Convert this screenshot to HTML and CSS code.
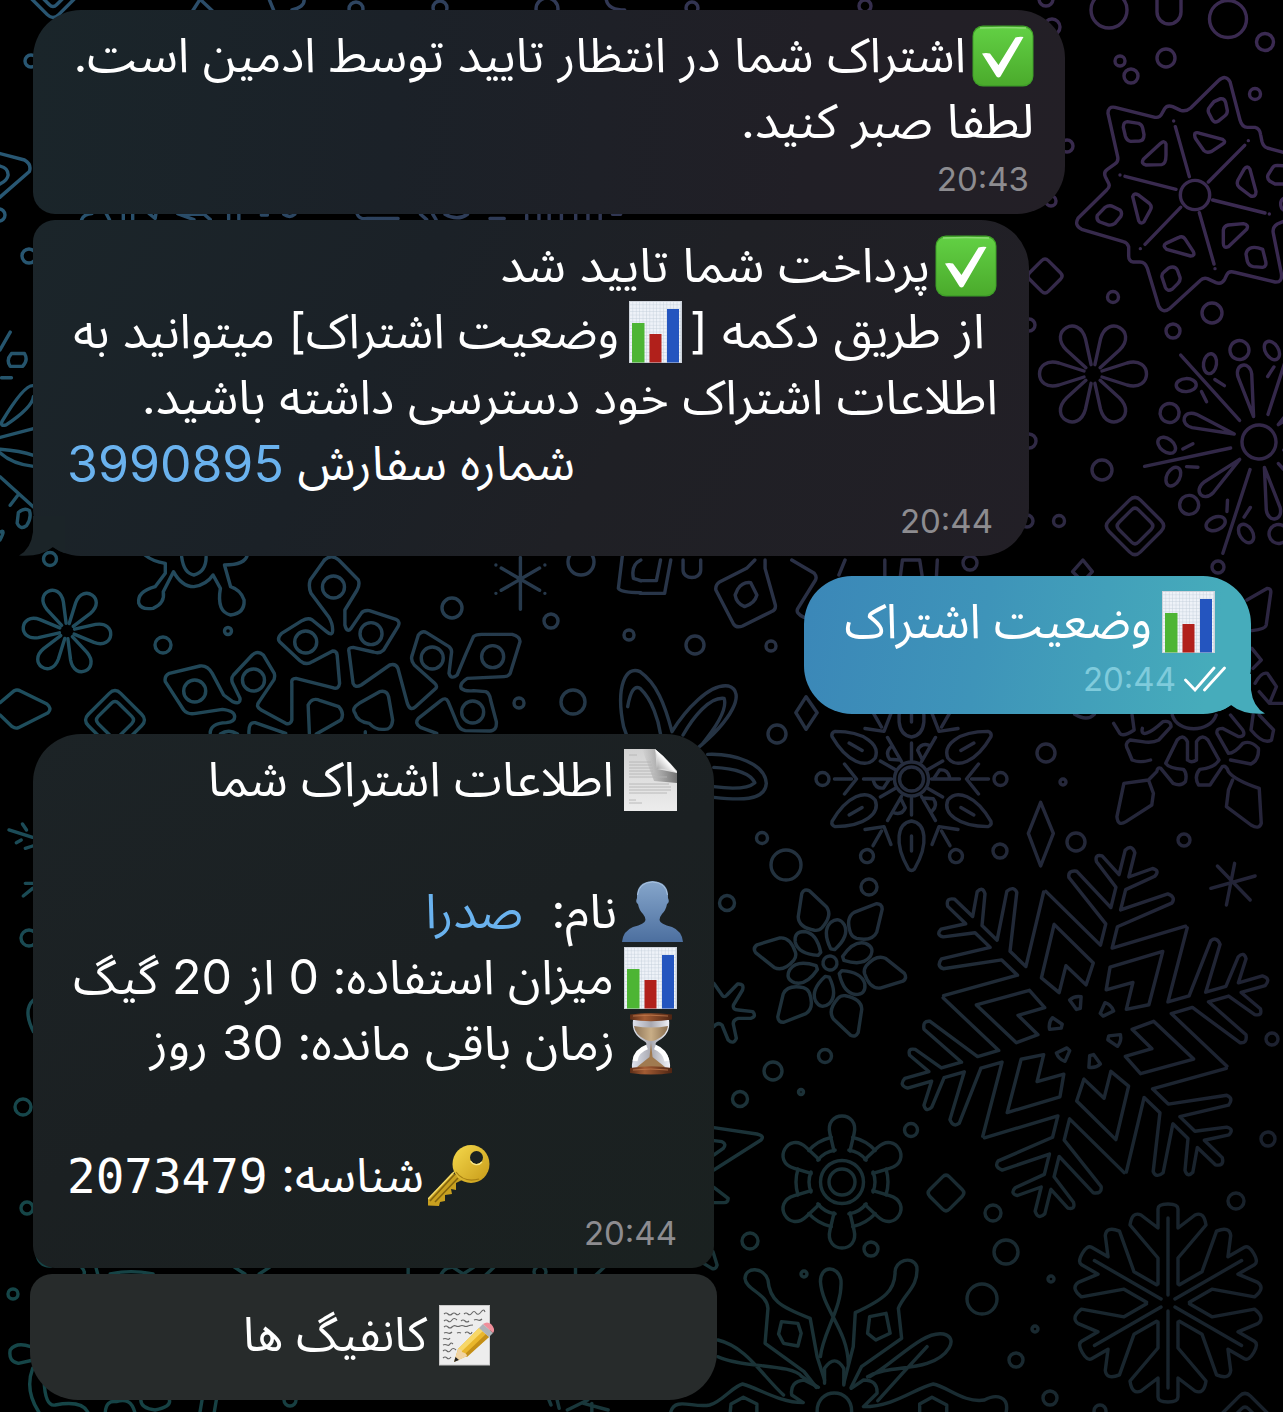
FILE: index.html
```html
<!DOCTYPE html>
<html lang="fa">
<head>
<meta charset="utf-8">
<title>گفتگو</title>
<link rel="stylesheet" href="styles.css">
</head>
<body>
<svg class="defs" width="0" height="0" aria-hidden="true">
  <defs>
    <linearGradient id="gGreen" x1="0" y1="0" x2="0" y2="1"><stop offset="0" stop-color="#62d044"/><stop offset="1" stop-color="#4bab2c"/></linearGradient>
    <linearGradient id="gPaper" x1="0" y1="0" x2="0" y2="1"><stop offset="0" stop-color="#d2d2d2"/><stop offset="1" stop-color="#ececec"/></linearGradient>
    <linearGradient id="gFold" x1="0" y1="1" x2="1" y2="0"><stop offset="0" stop-color="#8a8a8a"/><stop offset=".5" stop-color="#fafafa"/><stop offset="1" stop-color="#cfcfcf"/></linearGradient>
    <linearGradient id="gShade" x1="0" y1="0" x2="1" y2="0"><stop offset="0" stop-color="#555" stop-opacity="0"/><stop offset="1" stop-color="#444" stop-opacity=".7"/></linearGradient>
    <linearGradient id="gMan" x1="0" y1="0" x2="0" y2="1"><stop offset="0" stop-color="#86a6cb"/><stop offset="1" stop-color="#4c6f9f"/></linearGradient>
    <linearGradient id="gWood" x1="0" y1="0" x2="1" y2="0"><stop offset="0" stop-color="#5b2c16"/><stop offset=".35" stop-color="#a35c34"/><stop offset="1" stop-color="#4e2412"/></linearGradient>
    <linearGradient id="gGlass" x1="0" y1="0" x2="1" y2="0"><stop offset="0" stop-color="#dfe3ee"/><stop offset=".5" stop-color="#a8a8b0"/><stop offset="1" stop-color="#f2f4fa"/></linearGradient>
    <linearGradient id="gSand" x1="0" y1="0" x2="1" y2="0"><stop offset="0" stop-color="#8d7457"/><stop offset=".5" stop-color="#c9ae87"/><stop offset="1" stop-color="#8a6f50"/></linearGradient>
    <linearGradient id="gKey" x1="0" y1="0" x2="1" y2="1"><stop offset="0" stop-color="#f5d94c"/><stop offset="1" stop-color="#c79a18"/></linearGradient>
    <pattern id="grid" width="3.4" height="3.4" patternUnits="userSpaceOnUse"><rect width="3.4" height="3.4" fill="#eef2f8"/><path d="M0 0H3.4M0 0V3.4" stroke="#c3cedb" stroke-width=".9"/></pattern>
    <symbol id="check" viewBox="0 0 62 62">
      <rect x=".5" y=".5" width="61" height="61" rx="10.500" fill="#3f9f28"/>
      <rect x="1.500" y="2" width="59" height="58" rx="9.500" fill="url(#gGreen)"/>
      <path d="M8 3Q31 2 54 3" stroke="#8bdc72" stroke-width="1.500" fill="none"/>
      <path d="M10 28.500Q14 27.500 18 28.500L26.500 40L43.500 12.500Q47 11.500 51.500 12L28.500 51.500Q26.500 53.500 24.500 51.500Z" fill="#fff"/>
    </symbol>
    <symbol id="chart" viewBox="0 0 53 62">
      <rect width="53" height="62" fill="#cdd2da"/><rect x="1" y="1" width="51" height="60" fill="url(#grid)"/>
      <rect x="3" y="22" width="12.500" height="39.500" fill="#4db534"/><rect x="20.500" y="33" width="12" height="28.500" fill="#b1201b"/><rect x="38" y="8" width="12" height="53.500" fill="#2455bf"/>
    </symbol>
    <symbol id="page" viewBox="0 0 53 62">
      <path d="M0 0H31Q43 10 53 22V62H0Z" fill="url(#gPaper)"/>
      <path d="M18 0H31L33 20L53 24V34L30 32Z" fill="url(#gShade)"/>
      <path d="M31 0Q34 8 33 20Q44 19 53 24Q44 10 31 0Z" fill="url(#gFold)"/>
      <path d="M5 6h8M5 13h22M5 16h23M5 19h24M5 22h24M5 25h28M5 28h38M5 35h40M5 38h42M5 41h42M5 44h38M5 51h7M5 54h13" stroke="#b4b4b4" stroke-width=".9"/>
    </symbol>
    <symbol id="man" viewBox="0 0 61 62">
      <path d="M0 61Q1 50 11 46Q23 43 23.500 39Q23.500 36 21 33Q17 29 16 23Q13 21 15 17Q14 1 30.500 0Q47 1 46 17Q48 21 45 23Q44 29 40 33Q37.500 36 37.500 39Q38 43 50 46Q60 50 61 61Z" fill="url(#gMan)"/>
      <path d="M15.500 14Q17 1.500 30.500 1Q44 1.500 45.500 14" stroke="#a9c2de" fill="none"/>
    </symbol>
    <symbol id="glass" viewBox="0 0 44 62">
      <path d="M4 7H40Q42 21 29 28Q24 31 29 34Q42 41 41 55H3Q2 41 15 34Q20 31 15 28Q2 21 4 7Z" fill="url(#gGlass)"/>
      <path d="M5 13Q22 16 39 13Q38 22 27 27Q22 29 17 27Q6 22 5 13Z" fill="url(#gSand)"/>
      <path d="M22 30L20.500 44L8 54Q22 58 36 54L23.500 44Z" fill="#a07a50"/>
      <path d="M6 48Q7 38 18 34M38 48Q36 38 26 34" stroke="#fff" stroke-width="5" fill="none"/>
      <path d="M1 1.500Q22-1 43 1.500V6.500Q22 10 1 6.500ZM1 55Q22 51.500 43 55V60Q22 63 1 60Z" fill="url(#gWood)"/>
      <path d="M4 3Q22 1.500 39 3M4 57Q22 55 39 57" stroke="#c07a4e" stroke-width=".8" fill="none"/>
    </symbol>
    <symbol id="key" viewBox="0 0 62 62">
      <path d="M24 28L0 54V60.500L11 61L12 57L17 56V50L24 49L23 44L28 45V38L36 34Z" fill="#c9a01f"/>
      <path d="M27 29L2 56M30 33L7 57" stroke="#83640f" stroke-width="1.600"/><path d="M26 27L0 54" stroke="#f4dc6b" stroke-width="1.500"/>
      <ellipse cx="43" cy="19" rx="18.500" ry="19" fill="url(#gKey)"/>
      <path d="M28 27Q36 38 51 34" stroke="#a67f12" stroke-width="1.200" fill="none"/>
      <circle cx="48.500" cy="12.500" r="6.500" fill="#1a2222"/><path d="M42.500 16A7 7 0 0 0 54 17" stroke="#fae98a" stroke-width="1.200" fill="none"/>
    </symbol>
    <symbol id="memo" viewBox="0 0 55 61">
      <rect width="51" height="60.500" fill="#c9c9c9"/><rect x="1" y="1" width="49" height="58.500" fill="#ededed"/>
      <path d="M5 9q2-2 4 0t4 0 4 0 4-1M25 9q2-2 4 0t4-1 4 0 5-1 4 0M5 16q2-2 4 0t4-1 5 0M22 16q2-2 4 0t4 0M35 15q2-1 4 0t4-1M5 22q2-2 4 0t4 0 4-1 4 0 4 0 4 0 5-1M5 28q2-1 4 0t4-1M18 28q2-1 4 0M26 28q2-2 4 0t3-1M4 34q2-1 4 0t3-1M4 40q2-1 4 0t3-1 3 0M4 46q2-2 4 0t4-1 5 0M4 53q2-2 4 0t4-1" stroke="#666" stroke-width="1.100" fill="none"/>
      <path d="M15 57L19 44L40 23L50 32L28 51Z" fill="#e9b62c"/><path d="M19 44L40 23L44 26L22 47Z" fill="#f7d767"/><path d="M25 50L47 29L50 32L28 52Z" fill="#c48f17"/>
      <path d="M15 57L19 44Q23 44 23 47Q28 48 28 51Z" fill="#f0d3a2"/><path d="M15 57L16.500 52L20 55Z" fill="#222"/>
      <path d="M40 23L44 19L54 28L50 32Z" fill="#aeb3b8"/><path d="M44 19Q48 16 52 19Q57 24 54 28Z" fill="#ef8f9b"/>
    </symbol>

    <g class="shapes">
    <path id="dia" d="M-3-14Q0-17 3-14L14-3Q17 0 14 3L3 14Q0 17-3 14L-14 3Q-17 0-14-3Z"/>
    <path id="petal" d="M9-3L34-11C60-18 60 18 34 11L9 3"/>
    <g id="flower"><use href="#petal"/><use href="#petal" transform="rotate(60)"/><use href="#petal" transform="rotate(120)"/><use href="#petal" transform="rotate(180)"/><use href="#petal" transform="rotate(240)"/><use href="#petal" transform="rotate(300)"/></g>
    <g id="ray"><path d="M29 0H117M65-12L76-9M65 12L76 9"/><ellipse cx="91" cy="16" rx="10" ry="6.500" transform="rotate(50 91 16)"/><ellipse cx="91" cy="-16" rx="10" ry="6.500" transform="rotate(-50 91 -16)"/><g transform="rotate(30)"><path d="M26 0L68-7C82-8 82 8 68 7Z"/><circle cx="94" r="9.500"/></g></g>
    <g id="burst"><circle r="17"/><use href="#ray"/><use href="#ray" transform="rotate(60)"/><use href="#ray" transform="rotate(120)"/><use href="#ray" transform="rotate(180)"/><use href="#ray" transform="rotate(240)"/><use href="#ray" transform="rotate(300)"/></g>
    <g id="lampArm"><path d="M20 0H48M67-15L55 0L67 15M60 0H77M22 0L28-9Q36-10 38-2"/><circle cx="89" r="6.500"/><g transform="rotate(30)"><path d="M42 0C44-14 64-18 90-3Q93 0 90 3C64 18 44 14 42 0ZM57 0H72M19 0H36"/></g></g>
    <g id="lamp"><circle r="17"/><circle r="12"/><use href="#lampArm"/><use href="#lampArm" transform="rotate(60)"/><use href="#lampArm" transform="rotate(120)"/><use href="#lampArm" transform="rotate(180)"/><use href="#lampArm" transform="rotate(240)"/><use href="#lampArm" transform="rotate(300)"/></g>
    <g id="leafArm"><path d="M36-4Q44-18 54-15L75-4Q79 0 75 4L54 15Q44 18 36 4Q34 0 36-4Z"/><path d="M14-2Q30-14 40-7Q48 0 40 7Q30 14 14 2Z" transform="rotate(-30)"/></g>
    <g id="leaf"><circle r="7"/><use href="#leafArm"/><use href="#leafArm" transform="rotate(60)"/><use href="#leafArm" transform="rotate(120)"/><use href="#leafArm" transform="rotate(180)"/><use href="#leafArm" transform="rotate(240)"/><use href="#leafArm" transform="rotate(300)"/></g>
    <g id="bigArm"><path d="M127-72L88-6L110-6L146-53Q153-56 154-47L127-5H148L168-30Q175-34 175-26L161-5H186Q194 0 186 5H161L175 26Q175 34 168 30L148 5H127L154 47Q153 56 146 53L110 6L88 6L127 72"/><g transform="rotate(30)"><path d="M112 0L64-27L45-14L69 0L45 14L64 27Z"/><path d="M24-2L35-6Q38 0 35 6L24 2Z"/></g></g>
    <g id="big"><use href="#bigArm"/><use href="#bigArm" transform="rotate(60)"/><use href="#bigArm" transform="rotate(120)"/><use href="#bigArm" transform="rotate(180)"/><use href="#bigArm" transform="rotate(240)"/><use href="#bigArm" transform="rotate(300)"/></g>
    <g id="crystalArm"><path d="M8 0H85M19-10H45L78-38Q92-36 88-27L75-10H94Q99-10 99 0T94 10H75L88 27Q92 36 78 38L45 10H19"/></g>
    <g id="crystal"><use href="#crystalArm" transform="rotate(30)"/><use href="#crystalArm" transform="rotate(90)"/><use href="#crystalArm" transform="rotate(150)"/><use href="#crystalArm" transform="rotate(210)"/><use href="#crystalArm" transform="rotate(270)"/><use href="#crystalArm" transform="rotate(330)"/></g>
    <g id="wheelArm"><path d="M31-8L48-12C72-18 72 18 48 12L31 8"/><g transform="rotate(30)"><path d="M44-13Q48 0 44 13M31-10Q35 0 31 10"/></g></g>
    <g id="wheel"><circle r="21.500"/><circle r="13"/><use href="#wheelArm" transform="rotate(30)"/><use href="#wheelArm" transform="rotate(90)"/><use href="#wheelArm" transform="rotate(150)"/><use href="#wheelArm" transform="rotate(210)"/><use href="#wheelArm" transform="rotate(270)"/><use href="#wheelArm" transform="rotate(330)"/></g>
    </g>
  </defs>
</svg>

<svg class="wallpaper" viewBox="0 0 1283 1412" aria-hidden="true">
  <defs>
    <linearGradient id="wTop" x1="0" y1="0" x2="1" y2="0"><stop offset="0" stop-color="#285874"/><stop offset=".4" stop-color="#303b57"/><stop offset=".75" stop-color="#362a4a"/><stop offset="1" stop-color="#3b2a52"/></linearGradient>
    <linearGradient id="wBottom" x1="0" y1="0" x2="1" y2="0"><stop offset="0" stop-color="#154648"/><stop offset=".6" stop-color="#1a3236"/><stop offset="1" stop-color="#18202a"/></linearGradient>
    <linearGradient id="wFade" x1="0" y1="0" x2="0" y2="1"><stop offset=".15" stop-color="#000"/><stop offset=".85" stop-color="#fff"/></linearGradient>
    <mask id="fade"><rect width="1283" height="1412" fill="url(#wFade)"/></mask>
    <mask id="pattern" maskUnits="userSpaceOnUse" x="0" y="0" width="1283" height="1412">
      <g class="ink">
        <use href="#flower" transform="translate(1093 374)"/>
        <use href="#flower" transform="translate(67 631) rotate(5) scale(.82)"/>
        <use href="#burst" transform="translate(1259 442) rotate(48)"/>
        <use href="#lamp" transform="translate(911.500 779)"/>
        <use href="#leaf" transform="translate(830 963) rotate(11)"/>
        <use href="#big" transform="translate(1085 1032) rotate(44)"/>
        <use href="#crystal" transform="translate(1168 1303)"/>
        <use href="#wheel" transform="translate(842 1182)"/>
        <use href="#dia" transform="translate(1045 276) scale(1.100)"/>
        <use href="#dia" transform="translate(1135 526) scale(1.850)"/><use href="#dia" transform="translate(1135 526) scale(1.150)"/>
        <use href="#dia" transform="translate(115 720) scale(1.900)"/><use href="#dia" transform="translate(115 720) scale(1.200)"/>
        <use href="#dia" transform="translate(946 1193) scale(1.150)"/>
        <use href="#dia" transform="translate(53-12) scale(1.900)"/><use href="#dia" transform="translate(53-12) scale(1.200)"/>
        <use href="#dia" transform="translate(1245 1422) scale(1.850)"/><use href="#dia" transform="translate(1245 1424) scale(1.100)"/>
        <circle cx="1109" cy="10" r="18"/><circle cx="1228" cy="19" r="18.500"/><circle cx="1265" cy="42" r="8.500"/><circle cx="1166" cy="58" r="9"/><circle cx="1120" cy="61" r="5"/><circle cx="1131" cy="76" r="7"/><circle cx="1255" cy="94" r="5.500"/><circle cx="1052" cy="27" r="8"/><circle cx="1046" cy="-1" r="7"/><circle cx="865" cy="6" r="6"/><circle cx="692" cy="8" r="6"/><circle cx="1067" cy="146" r="6"/><circle cx="1051" cy="201" r="5"/>
        <circle cx="1113" cy="297" r="5.500"/><circle cx="1212" cy="313" r="10"/><circle cx="1173" cy="331" r="7"/><circle cx="1102" cy="470" r="10"/><circle cx="1059" cy="521" r="5.500"/><circle cx="1029" cy="441" r="7"/><circle cx="1029" cy="325" r="6"/><circle cx="1027" cy="521" r="6"/>
        <circle cx="356" cy="9" r="7"/><circle cx="440" cy="8" r="7"/><circle cx="547" cy="9" r="11"/><circle cx="31" cy="61" r="6"/><circle cx="29" cy="256" r="7"/><circle cx="-1" cy="215" r="6"/>
        <circle cx="50" cy="559" r="6.500"/><circle cx="163" cy="645" r="8"/><circle cx="228" cy="631" r="3.500"/><circle cx="452" cy="608" r="10"/><circle cx="551" cy="621" r="7"/><circle cx="629" cy="635" r="5"/><circle cx="519" cy="703" r="5"/><circle cx="573" cy="702" r="12"/><circle cx="581" cy="562" r="13"/>
        <circle cx="695" cy="645" r="9"/><circle cx="771" cy="646" r="5"/><circle cx="777" cy="734" r="9"/><circle cx="1046" cy="753" r="9"/><circle cx="1063" cy="782" r="3"/><circle cx="1076" cy="842" r="9"/><circle cx="1184" cy="840" r="6"/><circle cx="762" cy="838" r="5.500"/><circle cx="786" cy="865" r="15"/><circle cx="869" cy="887" r="8"/><circle cx="727" cy="903" r="7.500"/><circle cx="1000" cy="851" r="7"/><circle cx="970" cy="563" r="7"/><circle cx="1218" cy="567" r="6"/>
        <circle cx="773" cy="1071" r="9"/><circle cx="825" cy="1056" r="6.500"/><circle cx="801" cy="1092" r="2.500"/><circle cx="740" cy="1099" r="7.500"/><circle cx="911" cy="1130" r="6.500"/><circle cx="750" cy="1241" r="8"/><circle cx="871" cy="1249" r="7"/><circle cx="804" cy="1274" r="3"/><circle cx="993" cy="1213" r="8"/><circle cx="1006" cy="1252" r="12"/><circle cx="982" cy="1299" r="15"/><circle cx="1051" cy="1279" r="3"/><circle cx="1035" cy="1329" r="3"/><circle cx="1016" cy="1360" r="7"/><circle cx="1050" cy="1398" r="7"/><circle cx="1272" cy="1039" r="6"/><circle cx="1268" cy="1139" r="7"/><circle cx="1236" cy="1201" r="8"/><circle cx="1100" cy="1411" r="6"/>
        <circle cx="29" cy="938" r="8"/><circle cx="23" cy="1107" r="8"/><circle cx="27" cy="1208" r="6"/><circle cx="13" cy="1294" r="5"/><circle cx="290" cy="1400" r="6"/><circle cx="540" cy="1272" r="6"/>
        <path d="M1157 0V12A12 12 0 0 0 1181 12V0"/>

        <g transform="scale(.4083 .3571)">
          <path d="M472 30L490-2L520 30M660 0L670 28M745 0Q745 20 715 28M1485 0Q1490 28 1530 28M0 430L60 448Q78 460 72 480L0 552M0 465Q20 470 20 490Q18 505 0 515M0 980L25 930M4 1058H28M28 990H60Q70 1010 55 1026H25Q14 1008 28 990ZM82 1080Q60 1075 5 1180Q0 1195 15 1190Q80 1140 82 1110M82 1200L0 1225M0 1258Q50 1262 82 1275M0 1268Q30 1300 82 1306M0 1335L82 1420M45 1385L25 1415M0 1490Q15 1480 0 1512M45 1435Q60 1420 72 1430Q78 1450 65 1472Q50 1485 42 1465Z"/>
          <path d="M200 615Q205 600 225 598M260 598L268 615M302 598V615M325 598V615M365 598L380 612L382 598M435 598L475 615M450 600L500 600L515 615M560 598V615M585 598V615M640 602H655M695 600Q710 612 722 600M875 600Q880 615 900 612L975 612M1030 600L1045 615M1060 600L1068 615M1090 600Q1120 620 1145 600M1200 612H1235M1290 602V615M1320 600V615M1345 600V615M1375 600V615M1410 600V615M1440 600V615M1470 600V615M1500 600H1520"/>
        </g>
        <g transform="translate(1060 60) scale(.33333)">
          <path d="M680 280L622 264Q610 260 606 245L602 225Q600 205 585 202H562Q546 202 540 180L510 65Q498 42 475 62L392 144Q378 156 362 151L338 140Q322 134 314 146L306 160Q300 174 285 172L165 142Q144 138 144 160L173 290Q176 304 165 312L142 328Q130 336 136 350L145 368Q152 380 140 390L54 475Q42 496 65 508L190 545Q202 548 206 560V588Q206 604 220 606H240Q256 606 262 625L296 738Q308 762 330 745L420 662Q430 652 442 656L468 668Q485 674 494 658L500 645Q506 632 520 636L645 666Q668 668 664 640L640 520Q636 502 652 492L680 480"/>
          <circle cx="405" cy="405" r="44"/>
          <path d="M346 200L388 350M341 183V183M554 256L445 366M565 242V242M195 349L348 388M180 345V345M255 553L362 442M241 566V566M462 612L418 458M465 626V626M615 459L458 420M628 462V462"/>
          <path d="M405 220Q410 216 420 220L488 238Q500 246 488 252L455 274Q440 280 432 272L408 238Q402 228 405 220ZM318 252V285Q318 312 305 314L258 315Q242 312 250 298L302 250Q314 240 318 252ZM552 328Q562 314 570 328L588 395Q588 412 572 408L538 382Q528 374 534 360ZM218 410Q222 398 234 404L268 430Q278 440 270 452L252 485Q242 494 236 482ZM505 495L550 491Q568 494 560 508L505 560Q490 566 490 550V510Q492 498 505 495ZM355 533Q368 526 376 538L400 575Q406 588 392 588L320 568Q306 558 318 550Z"/>
          <path d="M462 125L482 116Q494 115 497 128L502 152Q502 162 494 168L474 184Q462 190 456 178L446 158Q442 148 450 140ZM202 185L236 190Q246 194 248 204L252 224Q252 242 238 243L212 244Q200 242 196 228L190 202Q190 186 202 185ZM135 442Q148 434 160 440L180 450Q188 458 182 470L165 490Q154 498 142 494L120 486Q108 480 112 466ZM570 565Q584 558 608 568L616 600Q622 620 608 622L580 620Q566 618 562 604L558 582Q560 570 570 565ZM326 624Q344 616 352 630L360 652Q362 662 354 670L336 688Q322 696 316 682L306 652Q304 642 312 636ZM680 318L652 316Q640 316 636 326L624 345Q620 356 630 364L645 372L680 372M680 412Q662 415 662 432T680 455"/>
        </g>
        <g transform="translate(0 540) scale(.40816 .33333)">
          <path d="M355 45Q375 65 405 70V100L380 140Q335 155 340 190Q345 210 375 205Q405 190 400 155L425 95Q445 140 475 140Q505 135 522 105L540 145Q530 215 565 225Q600 220 598 180Q590 150 565 140L550 75Q600 75 606 45M445 50Q450 100 475 105Q505 95 505 50"/>
          <path d="M795 60Q812 40 830 60L878 120Q882 135 875 150L845 210V255Q850 280 860 265L885 220Q890 210 905 212L970 238Q982 245 975 260L940 330Q930 342 915 336L865 322Q852 322 855 335L865 430Q870 445 885 435L955 375Q970 370 975 385L998 490Q1005 515 1018 500L1068 445Q1072 438 1065 430L1015 375Q1005 360 1010 345L1025 285Q1035 270 1045 278L1100 320Q1108 328 1106 340L1100 400Q1105 420 1120 405L1142 340L1160 290Q1165 283 1180 283H1255Q1275 290 1274 305L1250 400Q1245 410 1235 410L1145 415Q1125 430 1130 445Q1140 455 1160 452L1190 455Q1200 460 1202 480L1216 545Q1218 572 1200 573L1140 572Q1125 568 1120 550L1098 485Q1092 470 1080 482L1025 535Q1015 550 1030 562L1070 580"/>
          <path d="M795 60L760 120Q755 140 762 160L805 230Q815 250 815 270Q815 290 800 275L765 240Q755 232 740 242L690 280Q678 295 685 305L735 362Q750 378 765 365L815 333Q825 333 826 345L832 430Q830 450 815 443L725 415Q713 415 715 430V540Q712 555 700 550L640 510Q625 500 635 485L668 425Q675 415 672 400L645 345Q632 330 618 345L572 405Q565 415 570 430L588 475Q590 495 570 485L548 465L520 400Q508 375 490 378L415 400Q402 408 405 425L450 510Q460 525 480 520L545 508Q575 512 575 530Q575 545 555 548Q515 550 515 580M610 582Q608 545 625 548L700 580M758 580L755 495Q765 470 785 482L830 500Q845 520 835 540L775 582M870 520Q860 505 880 490L930 455Q948 450 952 470L962 540Q960 570 940 568Q920 570 905 550Q875 545 870 520M895 575V582"/>
          <ellipse cx="817" cy="141" rx="27" ry="33"/><ellipse cx="749" cy="306" rx="27" ry="33"/><ellipse cx="909" cy="281" rx="27" ry="33"/><ellipse cx="477" cy="453" rx="27" ry="33"/><ellipse cx="621" cy="420" rx="27" ry="33"/><ellipse cx="1059" cy="354" rx="27" ry="33"/><ellipse cx="1207" cy="350" rx="27" ry="33"/><ellipse cx="1158" cy="516" rx="27" ry="33"/><path d="M540 582Q560 565 582 582"/>
          <path d="M0 488L35 452Q42 447 50 453L115 492Q128 505 118 518L45 563Q38 567 30 560L0 525"/>
          <path d="M1275 52V208M1215 75V75M1335 75V75M1215 160V160M1335 160V160M1228 84L1322 151M1322 84L1228 151M1525 45L1515 145Q1520 158 1570 158M1570 60Q1545 75 1552 115L1570 122"/>
          <path d="M22 870L80 892M55 852L65 870M40 908L52 900M62 925L80 918M62 1030H80M57 1068L80 1045"/>
        </g>
        <g transform="translate(640 560) scale(.41008 .33333)">
          <path d="M50 0L40 62H0M75 0L60 100H0M105 0V30C105 60 148 60 148 30V0M305 0V25L330 135Q332 150 320 155L250 198Q235 205 228 192L185 90Q183 75 195 65L260 25L280 0M238 88Q250 65 270 68L285 105Q280 130 255 140Q235 130 232 105ZM370 0L425 40Q432 50 428 60L385 145Q378 160 400 172M485 45L500 0M597 0V47M725 0L723 47M635 47L640 0H682L688 47"/>
          <path d="M405 410L432 458L405 508L380 458ZM977 727L1008 820L977 918L947 820ZM1080 0L1103 35L1080 65L1055 35Z"/>
          <path d="M0 335C40 370 60 430 78 515C110 450 170 370 215 378C260 395 225 480 135 570M0 385C30 420 45 480 50 522M105 525C130 470 170 410 205 415C215 450 180 510 150 555M165 583C230 580 305 610 308 670C305 725 240 720 180 712M180 622C230 625 270 640 280 668C260 690 210 685 180 680M0 335C-35 315-60 380-40 500L-20 570M-30 440Q-20 370 0 385"/>
          <path d="M1480 120L1530 85Q1540 85 1538 100L1527 195Q1525 208 1492 212M1492 265L1515 300L1495 325M1500 370Q1515 335 1530 340L1552 380L1535 430M1510 395L1535 430H1570M1060 463Q1090 485 1108 463"/>
          <path d="M1155 490L1170 520Q1178 532 1205 510L1200 465M1225 505C1220 530 1240 525 1275 485Q1295 480 1295 500L1265 540Q1250 550 1225 545L1195 540Q1180 550 1190 570L1200 600Q1220 610 1245 600M1298 465C1310 520 1390 520 1405 465M1495 465L1490 510Q1520 555 1540 540L1545 510L1510 465M1440 465L1470 510Q1478 530 1460 530L1420 505Q1405 505 1407 520L1435 580M1335 600V545Q1325 520 1310 540L1282 610Q1290 625 1325 628Q1335 640 1330 665Q1320 680 1300 670L1270 625Q1262 620 1260 635L1240 660L1180 670L1163 770Q1165 800 1185 785L1248 735L1252 700L1240 660M1335 600Q1345 610 1357 600V545Q1370 520 1385 540L1412 600Q1400 625 1365 628Q1350 650 1362 675H1390L1420 620Q1430 615 1435 635Q1450 660 1510 685L1515 790Q1510 810 1490 795L1430 740L1435 690L1445 660M1435 580Q1450 580 1470 550Q1490 540 1508 565Q1510 600 1490 612L1440 600"/>
          <path d="M1450 910L1430 1035M1408 918L1488 1020M1392 985L1500 948"/>
        </g>
        <g transform="translate(0 960) scale(.40816 .33333)">
          <path d="M82 120Q55 150 82 215M90 880Q95 920 125 918M200 922Q210 935 205 945M235 922L240 945M270 942Q320 928 375 942M575 922L600 942M660 922L635 942M1000 922V945M1080 945Q1090 920 1110 922L1135 942L1160 922M1210 922L1190 945M1410 922V945M1480 922L1460 945M75 1160Q40 1145 25 1170Q20 1205 45 1210L82 1200M80 1225Q60 1290 95 1356M108 1260Q110 1340 135 1335Q200 1320 215 1356M258 1356Q260 1320 285 1325Q320 1310 330 1356M345 1320Q345 1345 380 1350Q420 1340 415 1320M495 1320L490 1356M530 1320L525 1356M1345 1320L1350 1335M1365 1320L1370 1345M1390 1350L1440 1320M1430 1330L1490 1350M1450 1356V1330"/>
        </g>
        <g transform="translate(640 980) scale(.41008 .33333)">
          <path d="M180 10L200 45Q205 55 212 45L238 12Q255 10 250 30L228 75Q225 90 240 90L275 95Q285 110 270 115H240Q225 120 228 135L235 175Q228 195 215 180L200 135Q190 125 180 140M180 443L285 462Q305 468 295 480L180 570M180 482L200 485Q212 492 203 505L180 525M180 622L215 655Q215 668 205 668H180M178 815L188 855Q185 870 175 865L155 850"/>
          <path d="M430 1222L400 1175L305 1090L312 985C310 940 258 930 256 895C258 860 300 860 312 900C316 960 340 980 415 1015L432 1130L450 1200M515 1222L540 1160L638 1075L630 985C645 940 680 920 675 860C665 825 620 840 622 880C620 930 600 955 525 998L520 1100L497 1210M440 1130C445 1060 495 980 490 900C482 855 440 855 440 905C445 990 508 1050 508 1155"/>
          <path d="M345 1025L385 1030L393 1060L385 1098L350 1090L338 1062ZM560 1010L600 1000L610 1060L575 1080L555 1060ZM190 1080C260 1100 300 1190 350 1245M190 1130C250 1165 370 1150 395 1190L435 1222L400 1200Q365 1205 370 1245L398 1268C340 1268 290 1225 250 1212C225 1220 200 1265 170 1275C130 1285 85 1250 75 1296M560 1190C620 1150 690 1050 740 1062C780 1075 750 1130 700 1150C650 1170 600 1160 555 1190M700 1100L640 1180L580 1262M515 1225L545 1200Q580 1200 578 1240L545 1280C620 1280 670 1225 715 1212C750 1220 790 1270 840 1260C870 1240 900 1250 893 1296M220 1296L222 1272L252 1252L285 1272V1296M682 1296V1272L712 1252L748 1275V1296M432 1296C430 1220 518 1220 516 1296M450 1210V1165Q475 1120 497 1165V1215"/>
        </g>
      </g>
    </mask>
  </defs>
  <g mask="url(#pattern)">
    <rect width="1283" height="1412" fill="url(#wTop)"/>
    <rect width="1283" height="1412" fill="url(#wBottom)" mask="url(#fade)"/>
  </g>
</svg>

<main class="chat">
  <article class="bubble incoming first">
    <p class="line"><svg class="emoji sq"><use href="#check"/></svg><span class="seg" style="width:890px;--s:1.004">اشتراک شما در انتظار تایید توسط ادمین است.</span></p>
    <p class="line"><span class="seg" style="width:290px;--s:1.034">لطفا صبر کنید.</span></p>
    <time class="time">20:43</time>
  </article>

  <article class="bubble incoming second">
    <p class="line"><svg class="emoji sq"><use href="#check"/></svg><span class="seg" style="width:428px;--s:1.032">پرداخت شما تایید شد</span></p>
    <p class="line indent"><span class="seg" style="width:293px;--s:1.04">از طریق دکمه [</span><svg class="emoji tall"><use href="#chart"/></svg><span class="seg" style="width:544px;--s:1.003">وضعیت اشتراک] میتوانید به</span></p>
    <p class="line"><span class="seg" style="width:853px;--s:1.017">اطلاعات اشتراک خود دسترسی داشته باشید.</span></p>
    <p class="line ltr"><a class="link num">3990895</a><span class="seg" style="width:279px">شماره سفارش</span></p>
    <time class="time">20:44</time>
    <svg class="tail left" viewBox="0 0 46 40"><path d="M14 0V16Q12 33 0 39.500Q22 41 34 31Q40 35.500 46 37.300V0Z" fill="#1b2428"/></svg>
  </article>

  <article class="bubble outgoing">
    <p class="line"><svg class="emoji tall"><use href="#chart"/></svg><span class="seg" style="width:308px;--s:.986">وضعیت اشتراک</span></p>
    <div class="status"><svg class="ticks" viewBox="0 0 42 26"><path d="M1.500 14L11 24L30 2M20.500 24L40.500 2"/></svg><time>20:44</time></div>
    <svg class="tail right" viewBox="0 0 46 40"><path d="M32 0V16Q34 33 46 39.500Q24 41 12 31Q6 35.500 0 37.300V0Z" fill="#46acbb"/></svg>
  </article>

  <article class="bubble incoming info">
    <p class="line"><svg class="emoji tall"><use href="#page"/></svg><span class="seg" style="width:405px;--s:1.008">اطلاعات اشتراک شما</span></p>
    <p class="line"></p>
    <p class="line"><svg class="emoji person"><use href="#man"/></svg><span class="seg" style="width:64px;--s:1.03">نام:</span><a class="link seg name" style="width:96px;--s:1.01">صدرا</a></p>
    <p class="line"><svg class="emoji tall"><use href="#chart"/></svg><span class="seg" style="width:539px;--s:1.007">میزان استفاده: 0 از 20 گیگ</span></p>
    <p class="line"><svg class="emoji hour"><use href="#glass"/></svg><span class="seg" style="width:464px;--s:1.027">زمان باقی مانده: 30 روز</span></p>
    <p class="line"></p>
    <p class="line ltr"><code class="code">2073479</code><span class="seg" style="width:141px">شناسه:</span><svg class="emoji sq key"><use href="#key"/></svg></p>
    <time class="time">20:44</time>
  </article>

  <button class="keyboard" type="button"><svg class="emoji memo"><use href="#memo"/></svg><span class="seg" style="width:183px;--s:.968">کانفیگ ها</span></button>
</main>
</body>
</html>
```
FILE: styles.css
```css
* { box-sizing: border-box; }

body {
  margin: 0;
  width: 1283px;
  height: 1412px;
  overflow: hidden;
  position: relative;
  background: #000;
  color: #fff;
  font-family: Inter, "Noto Sans Arabic", "DejaVu Sans", sans-serif;
  font-size: 48px;
}

.defs { position: absolute; }

.wallpaper {
  position: absolute;
  inset: 0;
  width: 1283px;
  height: 1412px;
}

.ink *, .shapes * { vector-effect: non-scaling-stroke; }
.ink {
  fill: none;
  stroke: #fff;
  stroke-width: 3.4;
  stroke-linecap: round;
  stroke-linejoin: round;
}

.chat {
  position: relative;
  display: flex;
  flex-direction: column;
  align-items: flex-start;
  padding: 10px 32px 0 33px;
}

.bubble {
  position: relative;
  isolation: isolate;
  padding: 13px 31px 9px 35px;
  direction: rtl;
}

.incoming { background: linear-gradient(95deg, #1a252a 0, #1b2128 35%, #211f26 75%, #231f26 100%); }

.first { width: 1032px; border-radius: 48px 48px 48px 22px; }

.second {
  width: 996px;
  margin-top: 6px;
  border-radius: 22px 48px 48px 48px;
  background: linear-gradient(120deg, #1b252a 0, #1b2127 35%, #1f2025 60%, #221f26 100%);
}

.outgoing {
  align-self: flex-end;
  width: 447px;
  margin-top: 20px;
  padding-right: 36px;
  border-radius: 48px;
  background: linear-gradient(100deg, #3b87b8 0, #3e94b9 40%, #46acbb 90%);
}

.info {
  width: 681px;
  margin-top: 20px;
  padding-right: 37px;
  border-radius: 48px 48px 22px 22px;
  background: linear-gradient(150deg, #1c2326, #1b2022 50%, #1a2120);
}

.line {
  display: flex;
  align-items: center;
  height: 66px;
  margin: 0;
}

.ltr { direction: ltr; }
.indent { padding-right: 13px; }

.seg {
  flex: none;
  white-space: pre;
  direction: rtl;
  line-height: 66px;
  padding-bottom: 3px;
  transform: scaleX(var(--s, 1));
  transform-origin: right;
}

.emoji { flex: none; display: block; }
.sq { width: 62px; height: 62px; margin-left: 6px; }
.second .sq { margin-right: 1px; margin-left: 5px; }
.tall { width: 53px; height: 62px; margin: 0 10px; }
.line > .tall:first-child { margin-right: 0; }
.person { width: 61px; height: 62px; margin: 0 -6px 0 5px; }
.hour { width: 44px; height: 62px; margin: 0 4px 0 14px; }
.key { margin-left: 4px; }

.link { color: #6ab2ee; }
.num {
  width: 229px;
  margin-left: -1px;
  font-size: 50px;
}
.name { margin-right: 30px; }

.code {
  width: 216px;
  margin-left: -1px;
  font: 47.6px "DejaVu Sans Mono", monospace;
}

.time, .status {
  display: flex;
  align-items: center;
  height: 50px;
  padding: 0 5px 2px 0;
  font-size: 33px;
  letter-spacing: 0;
  color: #8d8c90;
}

.info .time { padding-right: 0; }

.status { padding-right: 0; margin-right: -11px; color: #7fcbdc; }
.ticks {
  width: 42px;
  height: 26px;
  margin-left: 8px;
  fill: none;
  stroke: #fff;
  stroke-width: 2.8;
  stroke-linecap: round;
}

.tail { position: absolute; z-index: -1; bottom: 0; width: 46px; height: 40px; }
.left { left: -14px; }
.right { right: -14px; }

.keyboard {
  display: flex;
  align-items: center;
  justify-content: center;
  direction: rtl;
  width: 687px;
  height: 126px;
  margin: 6px 0 0 -3px;
  padding: 0 10px 4px 0;
  border: 0;
  border-radius: 22px 22px 48px 48px;
  background: #272b2b;
  color: #fff;
  font: inherit;
}

.memo { width: 55px; height: 61px; margin-left: 12px; }
```
